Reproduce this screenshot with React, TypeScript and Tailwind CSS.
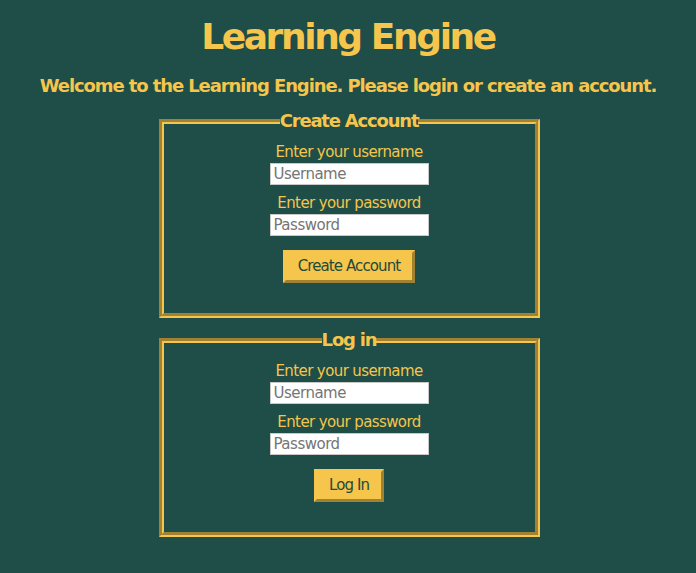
import React from "react";

function Section({ title, button }: { title: string; button: string }) {
  return (
    <fieldset className="w-[381px] border-[5px] [border-style:groove] border-[#f5c54c] px-0 pt-[11px] pb-[30px] flex flex-col items-center m-0 min-w-0">
      <legend className="mx-auto p-0 text-[18px] leading-[22px] font-bold tracking-[-1.2px]">{title}</legend>
      <label className="text-[15px] leading-[18px] tracking-[-0.6px]">Enter your username</label>
      <input
        className="mt-[2px] w-[159px] h-[22px] bg-white border border-[#c8c8c8] px-[3px] text-[15px] text-black tracking-[-0.5px] placeholder:text-[#757575] outline-none"
        placeholder="Username"
      />
      <label className="mt-[9px] text-[15px] leading-[18px] tracking-[-0.6px]">Enter your password</label>
      <input
        type="password"
        className="mt-[2px] w-[159px] h-[22px] bg-white border border-[#c8c8c8] px-[3px] text-[15px] text-black tracking-[-0.5px] placeholder:text-[#757575] outline-none"
        placeholder="Password"
      />
      <button className="mt-[14px] h-[33px] px-[12px] bg-[#f5c54c] border-[3px] [border-style:outset] border-[#f5c54c] text-[15px] text-[#1f4a3a] tracking-[-0.9px]">
        {button}
      </button>
    </fieldset>
  );
}

export default function App() {
  return (
    <div className="min-h-screen bg-[#1f4d47] font-['DejaVu_Sans',sans-serif] text-[#f5c54c] flex flex-col items-center">
      <h1 className="mt-[17px] text-[36px] leading-[40px] font-bold tracking-[-2.4px]">Learning Engine</h1>
      <h3 className="mt-[18px] text-[18px] leading-[22px] font-bold tracking-[-1.1px]">
        Welcome to the Learning Engine. Please login or create an account.
      </h3>
      <div className="mt-[13px] ml-[2px] flex flex-col items-center gap-[11px]">
        <Section title="Create Account" button="Create Account" />
        <Section title="Log in" button="Log In" />
      </div>
    </div>
  );
}
